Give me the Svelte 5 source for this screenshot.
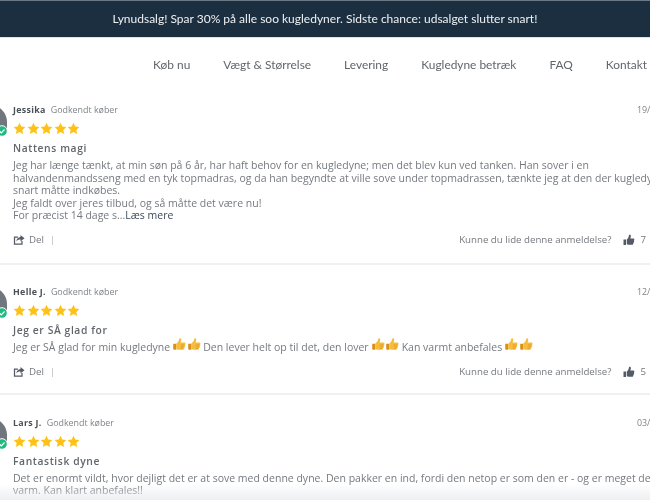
<script>
    const links = ["Køb nu", "Vægt & Størrelse", "Levering", "Kugledyne betræk", "FAQ", "Kontakt"];

    const reviews = [
        {
            name: "Jessika",
            date: "19/04/2021",
            title: "Nattens magi",
            votes: 7,
            lines: [
                "Jeg har længe tænkt, at min søn på 6 år, har haft behov for en kugledyne; men det blev kun ved tanken. Han sover i en halvandenmandsseng med en tyk topmadras, og da han begyndte at ville sove under topmadrassen, tænkte jeg at den der kugledyne snart måtte indkøbes.",
                "Jeg faldt over jeres tilbud, og så måtte det være nu!",
            ],
            more: "For præcist 14 dage s...",
        },
        {
            name: "Helle J.",
            date: "12/04/2021",
            title: "Jeg er SÅ glad for",
            votes: 5,
            thumbs: ["Jeg er SÅ glad for min kugledyne", "Den lever helt op til det, den lover", "Kan varmt anbefales"],
        },
        {
            name: "Lars J.",
            date: "03/04/2021",
            title: "Fantastisk dyne",
            lines: [
                "Det er enormt vildt, hvor dejligt det er at sove med denne dyne. Den pakker en ind, fordi den netop er som den er - og er meget dejlig og varm. Kan klart anbefales!!",
            ],
        },
    ];
</script>

{#snippet star()}
    <svg class="star" viewBox="0 0 24 24"><path d="M12 1.500l3.200 7 7.600.9-5.600 5.200 1.500 7.600L12 18.400l-6.700 3.800 1.500-7.600L1.200 9.400l7.600-.9z" /></svg>
{/snippet}

{#snippet thumbEmoji()}
    <svg class="emoji" viewBox="0 0 24 24">
        <path d="M2 11h5v10H3.500C2.700 21 2 20.300 2 19.500z" fill="#d98f1a" />
        <path d="M7 11c3-2 4.500-4.500 5-8 .2-1.300 3.300-1.200 3.300 1.500 0 1.800-.6 3.200-1.100 4.500h6.300c2.300 0 2.500 3 .9 3.500 1.200 1 .8 2.900-.5 3.200.7 1.200.2 2.600-1 2.900.3 1.400-.5 2.400-2 2.400H11c-1.700 0-2.800-.5-4-1z" fill="#f6bd3c" />
        <path d="M14.500 13h6M14.500 16h5.500M14.500 19h4" stroke="#d98f1a" stroke-width="1" fill="none" />
    </svg>
{/snippet}

<div class="page">
    <div class="banner">Lynudsalg! Spar 30% på alle soo kugledyner. Sidste chance: udsalget slutter snart!</div>

    <nav class="nav">
        {#each links as link}
            <span>{link}</span>
        {/each}
    </nav>

    <div class="list">
        {#each reviews as review}
            <div class="review">
                <div class="avatar">
                    <div class="photo"></div>
                    <svg class="badge" viewBox="0 0 12 12">
                        <circle cx="6" cy="6" r="5.300" fill="#1fb981" stroke="#fff" stroke-width="1" />
                        <path d="M3.500 6.100l1.800 1.800 3.200-3.400" fill="none" stroke="#fff" stroke-width="1.200" />
                    </svg>
                </div>
                <div class="content">
                    <div class="head">
                        <span><b>{review.name}</b><span class="buyer">Godkendt køber</span></span>
                        <span class="date">{review.date}</span>
                    </div>
                    <div class="stars">
                        {#each [1, 2, 3, 4, 5] as _}
                            {@render star()}
                        {/each}
                    </div>
                    <div class="title">{review.title}</div>
                    <div class="body">
                        {#if review.thumbs}
                            {#each review.thumbs as part}
                                {part}<span class="pair">{@render thumbEmoji()}{@render thumbEmoji()}</span>
                            {/each}
                        {:else}
                            {#each review.lines as line}
                                <div>{line}</div>
                            {/each}
                            {#if review.more}
                                <div>{review.more}<span class="more">Læs mere</span></div>
                            {/if}
                        {/if}
                    </div>
                    {#if review.votes}
                        <div class="foot">
                            <span class="share">
                                <svg viewBox="0 0 24 24" class="share-icon">
                                    <path d="M10 6H3v14h15v-6" fill="none" stroke="currentColor" stroke-width="2.500" />
                                    <path d="M15 2l8 6.500-8 6.500v-4c-4 0-6.500 1-8.500 4 .5-5 3.500-8.500 8.500-9z" fill="currentColor" />
                                </svg>
                                Del<i class="sep">|</i>
                            </span>
                            <span class="vote">
                                Kunne du lide denne anmeldelse?
                                <svg viewBox="0 0 24 24" class="thumb">
                                    <path d="M1 11h5v11H1zM7.500 11c2.500-2 4-4.500 4.500-8.500.2-1.500 3.800-1.300 3.800 1.500 0 2-.6 3.500-1.200 5h6.200c2.400 0 2.600 3 1 3.500 1.200 1 .8 3-.5 3.300.7 1.200.2 2.700-1 3 .3 1.500-.6 2.700-2 2.700h-7c-1.500 0-2.500-.5-3.800-1z" fill="currentColor" />
                                </svg>
                                <span class="count">{review.votes}</span>
                            </span>
                        </div>
                    {/if}
                </div>
            </div>
        {/each}
    </div>

    <div class="fade"></div>
</div>

<style>
    :global(body) {
        margin: 0;
        background: #fff;
    }

    .page {
        position: relative;
        width: 650px;
        height: 500px;
        overflow: hidden;
        font-family: "Open Sans", sans-serif;
        filter: blur(0.3px);
    }

    .banner {
        height: 36px;
        border-top: 1px solid #6b7986;
        border-bottom: 1px solid #dfe3e6;
        background: #1c2f40;
        color: #eef1f3;
        font-family: Lato, sans-serif;
        font-size: 12px;
        line-height: 36px;
        text-align: center;
    }

    .nav {
        display: flex;
        justify-content: flex-end;
        gap: 33px;
        height: 52px;
        padding-right: 3px;
        color: #60666c;
        font-family: Lato, sans-serif;
        font-size: 11.900px;
        line-height: 54px;
        white-space: nowrap;
    }

    .list {
        margin-left: -27px;
        width: 704px;
    }

    .review {
        display: flex;
        gap: 6px;
        padding: 12px 0 15px;
        border-bottom: 2px solid #f0f0f0;
    }

    .review + .review {
        padding-top: 19px;
        padding-bottom: 13px;
    }

    .review:last-child {
        padding-top: 20px;
    }

    .avatar {
        position: relative;
        flex: none;
        width: 34px;
        height: 34px;
    }

    .photo {
        width: 34px;
        height: 24px;
        margin-top: 3px;
        border-radius: 17px 17px 0 0;
        background: #70757e;
    }

    .badge {
        position: absolute;
        right: -1px;
        top: 23px;
        width: 12px;
        height: 12px;
    }

    .content {
        flex: none;
        width: 671px;
        color: #75797f;
        font-size: 10.500px;
    }

    .head {
        display: flex;
        justify-content: space-between;
        font-size: 8.900px;
        line-height: 16px;
    }

    .head b {
        margin-right: 5px;
        color: #4a5058;
        font-weight: 700;
        letter-spacing: 0.3px;
    }

    .buyer,
    .date {
        color: #7f8489;
    }

    .stars {
        display: flex;
        gap: 0.500px;
        height: 14px;
        margin-top: 4px;
    }

    .star {
        width: 13px;
        height: 13px;
        fill: #fdc215;
    }

    .title {
        margin-top: 4px;
        color: #60666c;
        font-size: 10.300px;
        font-weight: 600;
        letter-spacing: 0.6px;
        line-height: 16px;
    }

    .body {
        margin-top: 3px;
        line-height: 12.600px;
    }

    .more {
        color: #3c4a5a;
    }

    .pair {
        display: inline-flex;
        height: 10px;
        margin: 0 2px;
        vertical-align: -1px;
    }

    .emoji {
        width: 14.500px;
        height: 14.500px;
        margin-top: -3.500px;
    }

    .foot {
        display: flex;
        justify-content: space-between;
        align-items: center;
        height: 16px;
        margin-top: 10px;
        padding-right: 38px;
        font-size: 9.700px;
    }

    .share,
    .vote {
        display: flex;
        align-items: center;
    }

    .share-icon {
        width: 12px;
        height: 12px;
        margin-right: 4px;
        color: #555b66;
    }

    .sep {
        margin-left: 6px;
        color: #b5b8bc;
        font-style: normal;
    }

    .thumb {
        width: 12px;
        height: 12px;
        margin-left: 12px;
        color: #555b66;
    }

    .count {
        margin-left: 5px;
    }

    .fade {
        position: absolute;
        left: 0;
        right: 0;
        bottom: 0;
        height: 16px;
        background: linear-gradient(rgba(235, 237, 240, 0), rgba(233, 235, 238, 0.8));
    }
</style>
